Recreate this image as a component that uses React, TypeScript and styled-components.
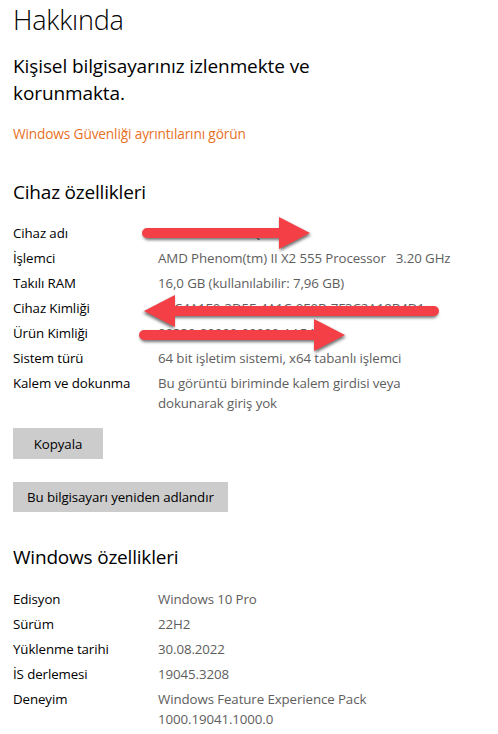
import React from 'react';
import styled, { createGlobalStyle } from 'styled-components';

const GlobalStyle = createGlobalStyle`
  html, body {
    margin: 0;
    padding: 0;
    background: #ffffff;
  }
  body {
    font-family: "Open Sans", "Noto Sans", "Liberation Sans", sans-serif;
    color: #000000;
  }
`;

const Page = styled.div`
  position: relative;
  width: 498px;
  height: 734px;
  overflow: hidden;
  padding: 0 13px;
  box-sizing: border-box;
`;

const Title = styled.h1`
  margin: 0;
  font-size: 27px;
  font-weight: 300;
  line-height: 40px;
  letter-spacing: -0.2px;
`;

const Subtitle = styled.p`
  margin: 13px 0 0;
  max-width: 340px;
  font-size: 19px;
  font-weight: 400;
  line-height: 27px;
  letter-spacing: -0.1px;
`;

const Link = styled.a`
  display: block;
  margin-top: 17px;
  font-size: 13.7px;
  line-height: 20px;
  color: #e8711f;
  text-decoration: none;
  letter-spacing: -0.15px;
`;

const SectionTitle = styled.h2<{ $gap: number }>`
  margin: ${p => p.$gap}px 0 0;
  font-size: 19px;
  font-weight: 400;
  line-height: 28px;
  letter-spacing: -0.2px;
`;

const Specs = styled.div<{ $gap: number }>`
  position: relative;
  margin-top: ${p => p.$gap}px;
  display: flex;
  flex-direction: column;
  gap: 5px;
`;

const Row = styled.div`
  display: grid;
  grid-template-columns: 145px 296px;
  font-size: 13.3px;
  line-height: 20px;
  letter-spacing: -0.1px;
`;

const Label = styled.span`
  color: #000000;
`;

const Value = styled.span<{ $keep?: boolean }>`
  color: #5e5e5e;
  white-space: ${p => (p.$keep ? 'pre' : 'normal')};
`;

const Button = styled.button<{ $gap: number; $h: number }>`
  display: block;
  margin-top: ${p => p.$gap}px;
  height: ${p => p.$h}px;
  min-width: 90px;
  padding: 0 14px;
  border: none;
  background: #cccccc;
  font-family: inherit;
  font-size: 13.3px;
  letter-spacing: -0.1px;
  color: #000000;
  cursor: pointer;
`;

const ArrowSvg = styled.svg`
  position: absolute;
  overflow: visible;
  filter: drop-shadow(1px 2px 1.5px rgba(0, 0, 0, 0.55));
`;

type ArrowProps = { left: number; top: number; width: number; flip?: boolean };

const Arrow: React.FC<ArrowProps> = ({ left, top, width, flip }) => {
  const w = width;
  const shaft = `M6 13 H${w - 30} V23 H6 A5 5 0 0 1 6 13 Z`;
  const head = `M${w - 32} 2 L${w - 1} 18 L${w - 32} 34 Z`;
  return (
    <ArrowSvg
      width={w}
      height={36}
      viewBox={`0 0 ${w} 36`}
      style={{ left, top, transform: flip ? 'scaleX(-1)' : undefined }}
    >
      <path d={shaft} fill="#f43f46" />
      <path d={head} fill="#f43f46" />
    </ArrowSvg>
  );
};

const deviceSpecs: [string, string][] = [
  ['Cihaz adı', 'DESKTOP-8KA5QGL'],
  ['İşlemci', 'AMD Phenom(tm) II X2 555 Processor   3.20 GHz'],
  ['Takılı RAM', '16,0 GB (kullanılabilir: 7,96 GB)'],
  ['Cihaz Kimliği', 'B2C4A1E0-3D5F-4A1C-9E0B-7F3C2A18B4D1'],
  ['Ürün Kimliği', '00330-80000-00000-AA541'],
  ['Sistem türü', '64 bit işletim sistemi, x64 tabanlı işlemci'],
  ['Kalem ve dokunma', 'Bu görüntü biriminde kalem girdisi veya dokunarak giriş yok'],
];

const windowsSpecs: [string, string][] = [
  ['Edisyon', 'Windows 10 Pro'],
  ['Sürüm', '22H2'],
  ['Yüklenme tarihi', '30.08.2022'],
  ['İS derlemesi', '19045.3208'],
  ['Deneyim', 'Windows Feature Experience Pack 1000.19041.1000.0'],
];

const App: React.FC = () => {
  return (
    <Page>
      <GlobalStyle />
      <Title>Hakkında</Title>
      <Subtitle>Kişisel bilgisayarınız izlenmekte ve korunmakta.</Subtitle>
      <Link href="#">Windows Güvenliği ayrıntılarını görün</Link>

      <SectionTitle $gap={34}>Cihaz özellikleri</SectionTitle>
      <Specs $gap={17}>
        {deviceSpecs.map(([label, value]) => (
          <Row key={label}>
            <Label>{label}</Label>
            <Value $keep={label === 'İşlemci'}>{value}</Value>
          </Row>
        ))}
        <Arrow left={128} top={-8} width={170} />
        <Arrow left={130} top={70} width={297} flip />
        <Arrow left={125} top={94} width={208} />
      </Specs>

      <Button $gap={15} $h={31}>Kopyala</Button>
      <Button $gap={23} $h={30}>Bu bilgisayarı yeniden adlandır</Button>

      <SectionTitle $gap={31}>Windows özellikleri</SectionTitle>
      <Specs $gap={18}>
        {windowsSpecs.map(([label, value]) => (
          <Row key={label}>
            <Label>{label}</Label>
            <Value>{value}</Value>
          </Row>
        ))}
      </Specs>
    </Page>
  );
};

export default App;
